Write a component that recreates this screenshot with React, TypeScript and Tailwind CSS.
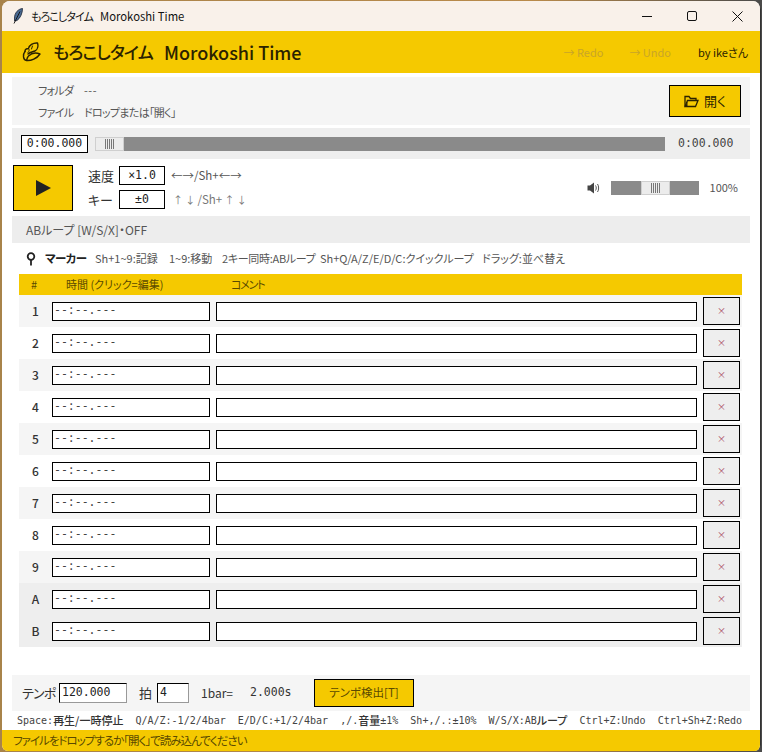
import React from "react";

const sans = "font-['Noto_Sans_CJK_JP','Noto_Sans',sans-serif] [font-feature-settings:'palt']";
const mono = "font-['DejaVu_Sans_Mono','Noto_Sans_CJK_JP',monospace]";

const rows = ["1", "2", "3", "4", "5", "6", "7", "8", "9", "A", "B"];

//Slider thumb with the little grip lines
function Thumb() {
  return (
    <div className="flex items-center justify-center gap-[1px] w-[29px] h-full bg-[#ececec] border border-[#cfcfcf]">
      {[0, 1, 2, 3, 4].map((i) => (
        <div key={i} className="w-[1px] h-[10px] bg-[#777]" />
      ))}
    </div>
  );
}

function Feather() {
  return (
    <svg width="10" height="16" viewBox="0 0 10 16">
      <path d="M9.500 0.500C5 1 1.500 5 1.500 10L1.500 13L4 12.500C7.500 10 9.500 5 9.500 0.500Z" fill="#4a6b94" stroke="#1c2433" strokeWidth="0.8" />
      <path d="M7 3.500L1 15.500" stroke="#111" strokeWidth="0.9" fill="none" />
    </svg>
  );
}

function Leaf() {
  return (
    <svg width="19" height="20" viewBox="0 0 19 20" fill="none" stroke="#2a2200" strokeWidth="1.400" strokeLinejoin="round" strokeLinecap="round">
      <path d="M3 9.500C3 7 5 6.500 6.500 6.500C7 3.500 11 0.500 15.500 1C16.500 4 15.500 7.500 13 9C10.500 10 8 10 6 12" />
      <path d="M3 9.500C0.500 12.500 1 18 4.500 18.500C9 19 15 16.500 18 12C14 10.500 9.500 11 6.500 14C5.500 15 5 16.500 4.500 18.500" />
      <path d="M6.500 6.500C7.500 7.500 7.500 9 6 10.500M10.500 4L9.500 7" strokeWidth="1" />
    </svg>
  );
}

function Folder() {
  return (
    <svg width="15" height="13" viewBox="0 0 15 13" fill="none" stroke="#2a2200" strokeWidth="1.300">
      <path d="M1 11.500V1.500H5L6.500 3.500H12V5.500" />
      <path d="M1 11.500L3.500 5.500H14L11.500 11.500Z" />
      <path d="M1.500 11L3.500 6.500V11Z" fill="#2a2200" stroke="none" />
    </svg>
  );
}

function Pin() {
  return (
    <svg width="10" height="14" viewBox="0 0 10 14" fill="none" stroke="#222" strokeWidth="1.800">
      <circle cx="5" cy="4.500" r="3.300" />
      <path d="M5 8V13.500" />
    </svg>
  );
}

function Speaker() {
  return (
    <svg width="14" height="12" viewBox="0 0 14 12" fill="none">
      <path d="M0.500 3.500H3L7 0.500V11.500L3 8.500H0.500Z" fill="#444" />
      <path d="M8.500 3.500C9.500 5 9.500 7 8.500 8.500M10.500 2C12 4 12 8 10.500 10" stroke="#555" strokeWidth="1" />
    </svg>
  );
}

function Entry({ text, className }: { text?: string; className: string }) {
  return (
    <div className={`flex items-center bg-white border border-black ${mono} ${className}`}>
      {text}
    </div>
  );
}

function J({ children }: { children: React.ReactNode }) {
  return <span className={`${sans} text-[11px] font-medium text-[#333]`}>{children}</span>;
}

export default function App() {
  return (
    <div className={`w-[762px] h-[752px] pl-[2px] pr-[1px] pt-[1px] pb-[1px] bg-[linear-gradient(90deg,#a8834a_0%,#b98a4a_70%,#4a4a4a_100%)] ${sans}`}>
      <div className="flex flex-col h-full bg-white rounded-t-lg rounded-b-md overflow-hidden border-r border-[#333]">
        {/* Title bar */}
        <div className="flex items-center h-[30px] shrink-0 bg-[#f9f1ea] text-[11.300px] text-[#111]">
          <div className="ml-[11px] w-[18px]">
            <Feather />
          </div>
          <span className="text-[11px] tracking-[-0.9px]">もろこしタイム</span>
          <span className="ml-[7px]">Morokoshi Time</span>
          <div className="ml-auto flex items-center mr-[17px] gap-[35px]">
            <div className="w-[10px] h-[1px] bg-[#111]" />
            <div className="w-[10px] h-[10px] border border-[#111] rounded-[2px]" />
            <svg width="11" height="11" viewBox="0 0 11 11" stroke="#111" strokeWidth="1">
              <path d="M0.500 0.500L10.500 10.500M10.500 0.500L0.500 10.500" />
            </svg>
          </div>
        </div>

        {/* Header */}
        <div className="flex items-center h-[42px] shrink-0 bg-[#f5c900] text-[#2a2200]">
          <div className="ml-[20px] w-[31px]">
            <Leaf />
          </div>
          <span className="text-[17px] font-medium tracking-[-0.8px]">もろこしタイム</span>
          <span className="ml-[11px] text-[18px] font-medium">Morokoshi Time</span>
          <div className="ml-auto flex items-center text-[11px] mr-[12px]">
            <span className="text-[#c9a528]">→ Redo</span>
            <span className="ml-[26px] text-[#c9a528]">→ Undo</span>
            <span className="ml-[27px]">by ikeさん</span>
          </div>
        </div>

        {/* File info */}
        <div className="flex items-center h-[48px] shrink-0 mt-[4px] ml-[10px] mr-[10px] bg-[#f5f5f5] text-[11px] tracking-[-0.7px] text-[#555]">
          <div className="grid grid-cols-[46px_auto] gap-y-[2px] ml-[26px] leading-[20px]">
            <span>フォルダ</span>
            <span className="tracking-[0.5px]">---</span>
            <span>ファイル</span>
            <span>ドロップまたは「開く」</span>
          </div>
          <button className="ml-auto mr-[9px] flex items-center justify-center gap-[5px] w-[72px] h-[32px] bg-[#f5c900] border border-black text-[13px] tracking-normal text-[#2a2200]">
            <Folder />
            開く
          </button>
        </div>

        {/* Seek */}
        <div className="flex items-center h-[31px] shrink-0 mt-[3px] ml-[10px] mr-[10px] bg-[#eeeeee]">
          <Entry text="0:00.000" className="ml-[9px] w-[67px] h-[18px] justify-center text-[11.500px] text-[#222]" />
          <div className="ml-[7px] w-[570px] h-[14px] bg-[#8a8a8a]">
            <Thumb />
          </div>
          <span className={`ml-[13px] text-[11.500px] text-[#444] ${mono}`}>0:00.000</span>
        </div>

        {/* Transport */}
        <div className="flex items-center h-[57px] shrink-0">
          <button className="ml-[11px] flex items-center justify-center w-[60px] h-[46px] bg-[#f5c900] border border-black">
            <svg width="15" height="16" viewBox="0 0 15 16">
              <path d="M0 0L15 8L0 16Z" fill="#222" />
            </svg>
          </button>
          <div className="ml-[15px] grid grid-cols-[25px_46px_auto] gap-x-[6px] gap-y-[4px] items-center">
            <span className="text-[13px] text-[#333] text-right whitespace-nowrap">速度</span>
            <Entry text="×1.0" className="h-[19px] justify-center text-[11.500px] text-[#222]" />
            <span className="text-[11.500px] text-[#555] whitespace-nowrap">←→/Sh+←→</span>
            <span className="text-[13px] text-[#333] text-right whitespace-nowrap">キー</span>
            <Entry text="±0" className="h-[19px] justify-center text-[11.500px] text-[#222]" />
            <span className="ml-[2px] text-[10px] text-[#777] whitespace-nowrap">↑ ↓ <span className="text-[11.500px]">/Sh+</span> ↑ ↓</span>
          </div>
          <div className="ml-auto flex items-center mr-[22px]">
            <Speaker />
            <div className="ml-[10px] flex w-[88px] h-[14px] bg-[#8a8a8a] pl-[30px]">
              <Thumb />
            </div>
            <span className="ml-[11px] text-[11px] text-[#555]">100%</span>
          </div>
        </div>

        {/* AB loop */}
        <div className="flex items-center h-[27px] shrink-0 ml-[10px] mr-[10px] pl-[14px] bg-[#ededed] text-[12px] text-[#555]">
          ABループ [W/S/X]・OFF
        </div>

        {/* Markers */}
        <div className="flex items-center h-[31px] shrink-0 pl-[24px]">
          <Pin />
          <span className="ml-[9px] w-[50px] text-[11.500px] tracking-[-0.5px] font-bold text-[#222]">マーカー</span>
          <div className="flex text-[11px] text-[#555] whitespace-nowrap">
            <span className="w-[74px]">Sh+1~9:記録</span>
            <span className="w-[53px]">1~9:移動</span>
            <span className="w-[98px] tracking-[-0.3px]">2キー同時:ABループ</span>
            <span className="w-[162px]">Sh+Q/A/Z/E/D/C:クイックループ</span>
            <span>ドラッグ:並べ替え</span>
          </div>
        </div>

        <div className="flex items-center h-[21px] shrink-0 ml-[17px] mr-[18px] bg-[#f5c900] text-[11px] text-[#5a4a00]">
          <span className="ml-[12px] w-[35px]">#</span>
          <span className="w-[165px]">時間 (クリック=編集)</span>
          <span className="tracking-[-1.200px]">コメント</span>
        </div>

        <div className="shrink-0 ml-[17px] mr-[18px]">
          {rows.map((r, i) => (
            <div
              key={r}
              className={`flex items-center h-[32px] ${i >= 9 ? "bg-[#eeeeee]" : i % 2 === 0 ? "bg-[#f5f5f5]" : "bg-white"}`}
            >
              <span className="w-[33px] text-center text-[12px] font-medium text-[#333]">{r}</span>
              <Entry text="--:--.---" className="w-[158px] h-[19px] pl-[1px] text-[11.500px] text-[#444]" />
              <Entry className="ml-[6px] w-[481px] h-[19px]" />
              <button className="ml-[6px] flex items-center justify-center w-[37px] h-[28px] bg-[#eeeeee] border border-black text-[9px] text-[#a8445e]">
                ×
              </button>
            </div>
          ))}
        </div>

        {/* Tempo */}
        <div className="flex items-center h-[36px] shrink-0 mt-[28px] ml-[10px] mr-[10px] bg-[#f5f5f5] text-[13px] text-[#333]">
          <span className="ml-[10px] w-[37px] tracking-[-0.8px]">テンポ</span>
          <Entry text="120.000" className="w-[68px] h-[20px] pl-[2px] text-[11.500px] text-[#222] border-r-[#999] border-b-[#999]" />
          <span className="ml-[12px] w-[18px]">拍</span>
          <Entry text="4" className="w-[32px] h-[20px] pl-[2px] text-[11.500px] text-[#222] border-r-[#999] border-b-[#999]" />
          <span className="ml-[12px] w-[49px] text-[12px]">1bar=</span>
          <span className={`w-[64px] text-[11.500px] ${mono}`}>2.000s</span>
          <button className="flex items-center justify-center w-[100px] h-[28px] bg-[#f5c900] border border-black text-[11.500px] text-[#5a4a00]">
            テンポ検出[T]
          </button>
        </div>

        {/* Key help */}
        <div className={`flex items-center h-[19px] shrink-0 pl-[15px] text-[10px] text-[#444] whitespace-pre ${mono}`}>
          Space:<J>再生/一時停止</J>  Q/A/Z:-1/2/4bar  E/D/C:+1/2/4bar  ,/.<J>音量</J>±1%  Sh+,/.:±10%  W/S/X:AB<J>ループ</J>  Ctrl+Z:Undo  Ctrl+Sh+Z:Redo
        </div>

        {/* Status */}
        <div className="flex items-center flex-1 pl-[11px] bg-[#f5c900] text-[11.500px] tracking-[-1px] text-[#5a4a00]">
          ファイルをドロップするか「開く」で読み込んでください
        </div>
      </div>
    </div>
  );
}
